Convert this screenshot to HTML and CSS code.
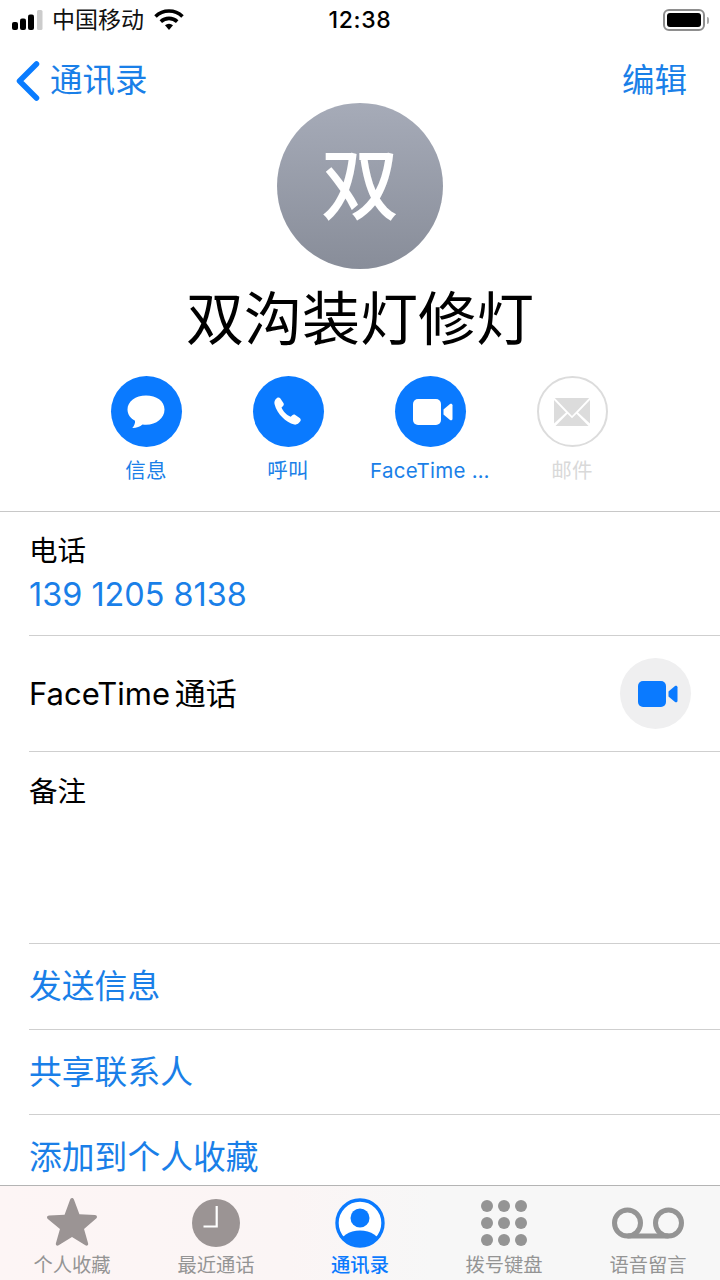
FILE: index.html
```html
<!DOCTYPE html>
<html lang="zh-CN">
<head>
<meta charset="utf-8">
<title>双沟装灯修灯</title>
<link rel="stylesheet" href="styles.css">
</head>
<body>
<div class="phone">
  <header class="status">
    <div class="status-left">
      <svg class="signal" width="32" height="22" viewBox="0 0 32 22"><rect x="1" y="13" width="6" height="8" rx="2" fill="#000"/><rect x="9" y="9.500" width="6" height="11.500" rx="2" fill="#000"/><rect x="17" y="5.500" width="6" height="15.500" rx="2" fill="#000"/><rect x="26" y="1" width="5.500" height="20" rx="1.500" fill="#ccc"/></svg>
      <span class="carrier">中国移动</span>
      <svg class="wifi" width="30" height="22" viewBox="0 0 30 22"><path d="M1.500 7.500a19.500 19.500 0 0 1 27 0" fill="none" stroke="#000" stroke-width="3.600"/><path d="M6.800 12.600a12 12 0 0 1 16.400 0" fill="none" stroke="#000" stroke-width="3.600"/><path d="M11 16.200a6 6 0 0 1 8 0L15 21z" fill="#000"/></svg>
    </div>
    <span class="clock">12:38</span>
    <div class="status-right">
      <span class="battery"><span class="battery-fill"></span></span>
      <span class="battery-cap"></span>
    </div>
  </header>

  <nav class="navbar">
    <a class="back">
      <svg width="26" height="42" viewBox="0 0 26 42"><path d="M22.500 4 5.500 21l17 17" fill="none" stroke="#0a7cff" stroke-width="5.500" stroke-linecap="round" stroke-linejoin="round"/></svg>
      <span>通讯录</span>
    </a>
    <a class="edit">编辑</a>
  </nav>

  <section class="contact">
    <div class="avatar">双</div>
    <h1 class="name">双沟装灯修灯</h1>
    <div class="actions">
      <div class="action">
        <span class="action-btn">
          <svg width="38" height="34" viewBox="0 0 38 34"><path d="M19 .5C8.500.5.500 6.500.500 14.500c0 5 3.200 9 7.500 11.200.4 2.600-1 5.200-2.700 7.300 3.500.2 7.700-1.200 10.200-3.500 1.200.2 2.400.3 3.500.3 10.500 0 18.500-6.700 18.500-15.300S29.500.5 19 .5z" fill="#fff"/></svg>
        </span>
        <span class="action-label">信息</span>
      </div>
      <div class="action">
        <span class="action-btn">
          <svg width="30" height="30" viewBox="0 0 30 30"><path d="M4 1c1.200-.8 2.600-.5 3.400.6l3 4.400c.7 1 .5 2.200-.3 3L8.500 10.600c.8 2 2 3.800 3.700 5.500 1.700 1.700 3.500 2.900 5.500 3.700l1.600-1.600c.8-.8 2-1 3-.3l4.400 3c1.100.8 1.400 2.200.6 3.400-1.500 2.200-3.600 3.700-6 3.300C17 26.800 12.500 23.500 9.300 20.300 6.100 17.100 2.800 12.500 1.500 7 1.100 4.600 1.800 2.500 4 1z" fill="#fff"/></svg>
        </span>
        <span class="action-label">呼叫</span>
      </div>
      <div class="action">
        <span class="action-btn">
          <svg class="video-glyph" width="40" height="26" viewBox="0 0 40 26"><rect x="0" y="0" width="28" height="26" rx="5" fill="#fff"/><path d="M30.500 10.500 37 5c1-.8 2.500-.2 2.500 1.200v13.600c0 1.400-1.500 2-2.500 1.200l-6.500-5.500z" fill="#fff"/></svg>
        </span>
        <span class="action-label">FaceTime …</span>
      </div>
      <div class="action is-off">
        <span class="action-btn">
          <svg width="36" height="28" viewBox="0 0 36 28"><path d="M.8 0h34.400L18 18zM0 2l12 12.500L0 25.500zM36 2 24 14.500l12 11zM1.500 28l12-12.300 4.500 4.500 4.500-4.500 12 12.300z" fill="#dcdcdc"/></svg>
        </span>
        <span class="action-label">邮件</span>
      </div>
    </div>
  </section>

  <main class="details">
    <div class="row row-phone">
      <div class="row-title">电话</div>
      <div class="row-number">139 1205 8138</div>
    </div>
    <div class="row row-facetime">
      <div class="row-title row-title-large">FaceTime 通话</div>
      <span class="round-video">
        <svg class="video-glyph" width="40" height="26" viewBox="0 0 40 26"><rect x="0" y="0" width="28" height="26" rx="5" fill="#0a7aff"/><path d="M30.500 10.500 37 5c1-.8 2.500-.2 2.500 1.200v13.600c0 1.400-1.500 2-2.500 1.200l-6.500-5.500z" fill="#0a7aff"/></svg>
      </span>
    </div>
    <div class="row row-notes">
      <div class="row-title">备注</div>
    </div>
    <div class="row row-link">发送信息</div>
    <div class="row row-link row-link-short">共享联系人</div>
    <div class="row row-link">添加到个人收藏</div>
  </main>

  <footer class="tabbar">
    <div class="tab">
      <span class="tab-icon tab-icon-star"><svg width="52" height="49" viewBox="0 0 54 50"><path d="M27 .5c1 0 1.700.7 2.100 1.800l5.600 15.100 16 .9c2.200.1 3 2.300 1.400 3.700L39.500 32.700l4.200 15c.5 1.800-1.200 3-2.800 2L27 41.200l-13.900 8.500c-1.600 1-3.300-.2-2.800-2l4.200-15L1.900 22.500c-1.600-1.400-.8-3.600 1.400-3.700l16-.9 5.600-15.100C25.300 1.200 26 .5 27 .5z" fill="#9b9494"/></svg></span>
      <span class="tab-label">个人收藏</span>
    </div>
    <div class="tab">
      <span class="tab-icon"><svg width="48" height="48" viewBox="0 0 48 48"><circle cx="24" cy="24" r="24" fill="#9b9494"/><path d="M24.700 7v20.500H11.500" fill="none" stroke="#fff" stroke-width="2.200"/></svg></span>
      <span class="tab-label">最近通话</span>
    </div>
    <div class="tab is-active">
      <span class="tab-icon"><svg width="50" height="50" viewBox="0 0 50 50"><defs><clipPath id="ring"><circle cx="25" cy="25" r="22"/></clipPath></defs><circle cx="25" cy="25" r="23" fill="#fff" stroke="#0a7aff" stroke-width="3.400"/><g clip-path="url(#ring)" fill="#0a7aff"><circle cx="25" cy="20" r="9.500"/><ellipse cx="25" cy="46" rx="20" ry="13.500"/></g></svg></span>
      <span class="tab-label">通讯录</span>
    </div>
    <div class="tab">
      <span class="tab-icon"><svg width="46" height="46" viewBox="0 0 46 46" fill="#949494"><circle cx="6" cy="6" r="6"/><circle cx="23" cy="6" r="6"/><circle cx="40" cy="6" r="6"/><circle cx="6" cy="23" r="6"/><circle cx="23" cy="23" r="6"/><circle cx="40" cy="23" r="6"/><circle cx="6" cy="40" r="6"/><circle cx="23" cy="40" r="6"/><circle cx="40" cy="40" r="6"/></svg></span>
      <span class="tab-label">拨号键盘</span>
    </div>
    <div class="tab">
      <span class="tab-icon"><svg width="72" height="50" viewBox="0 0 72 50"><g fill="none" stroke="#949494" stroke-width="5"><circle cx="15.500" cy="25" r="13"/><circle cx="56.500" cy="25" r="13"/><path d="M15.500 38h41"/></g></svg></span>
      <span class="tab-label">语音留言</span>
    </div>
  </footer>
</div>
</body>
</html>
```

FILE: styles.css
```css
* { box-sizing: border-box; }

html, body {
  margin: 0;
  padding: 0;
  background: #fff;
}

body {
  font-family: Inter, "Noto Sans CJK SC", sans-serif;
  color: #000;
}

.phone {
  width: 720px;
  height: 1280px;
  display: flex;
  flex-direction: column;
  overflow: hidden;
}

/* status bar */
.status {
  height: 40px;
  flex: none;
  display: grid;
  grid-template-columns: 1fr auto 1fr;
  align-items: center;
  padding: 0 11px;
}

.status-left {
  display: flex;
  align-items: center;
}

.signal { margin-right: 9px; }

.carrier {
  font-size: 23px;
  line-height: 28px;
  color: #111;
}

.wifi { margin-left: 10px; }

.clock {
  font-size: 23px;
  font-weight: 500;
  letter-spacing: 0.7px;
}

.status-right {
  display: flex;
  align-items: center;
  justify-content: flex-end;
}

.battery {
  width: 42px;
  height: 22px;
  border: 2px solid #8e8e8e;
  border-radius: 6px;
  padding: 2px;
  display: block;
}

.battery-fill {
  display: block;
  width: 100%;
  height: 100%;
  background: #000;
  border-radius: 3px;
}

.battery-cap {
  width: 2px;
  height: 7px;
  margin-left: 2px;
  background: #a9a9a9;
  border-radius: 0 2px 2px 0;
}

/* navigation bar */
.navbar {
  height: 63px;
  flex: none;
  display: flex;
  align-items: center;
  justify-content: space-between;
  padding: 18px 33px 0 14px;
  font-size: 32.500px;
  line-height: 40px;
  color: #1a7fe8;
}

.back {
  display: flex;
  align-items: center;
  gap: 10px;
}

.back svg { flex: none; }

/* contact header */
.contact {
  flex: none;
  height: 408px;
  display: flex;
  flex-direction: column;
  align-items: center;
}

.avatar {
  width: 166px;
  height: 166px;
  flex: none;
  border-radius: 50%;
  background: linear-gradient(180deg, #a6abb8 0%, #888d99 100%);
  color: #fff;
  font-size: 78px;
  font-weight: 500;
  line-height: 166px;
  text-align: center;
}

.name {
  margin: 13px 0 0;
  font-size: 58px;
  font-weight: 400;
  line-height: 74px;
  color: #000;
}

.actions {
  margin: 20px 0 0 -2px;
  display: flex;
  width: 568px;
}

.action {
  width: 142px;
  display: flex;
  flex-direction: column;
  align-items: center;
}

.action-btn {
  width: 71px;
  height: 71px;
  border-radius: 50%;
  background: #0a7aff;
  display: flex;
  align-items: center;
  justify-content: center;
}

/* the camera glyph sits slightly right of its circle's centre */
.video-glyph { margin-left: 5px; }

.action-label {
  margin-top: 10px;
  font-size: 20.500px;
  line-height: 28px;
  letter-spacing: 0.3px;
  color: #1a7fe8;
  white-space: nowrap;
}

.is-off .action-btn {
  background: #fff;
  border: 2px solid #dcdcdc;
}

.is-off .action-label { color: #d9d9d9; }

/* detail rows */
.details {
  flex: 1;
  border-top: 1px solid #c8c8c8;
  min-height: 0;
  padding-left: 29px;
}

.row {
  border-bottom: 1px solid #cfcfcf;
}

.row:last-child { border-bottom: 0; }

.row-title {
  font-size: 28.500px;
  line-height: 38px;
  color: #000;
}

.row-title-large {
  font-size: 31px;
  word-spacing: -4px;
}

.row-phone {
  height: 124px;
  padding-top: 20px;
}

.row-number {
  margin-top: 2px;
  font-size: 32.400px;
  line-height: 46px;
  color: #1a7fe8;
}

.row-facetime {
  height: 116px;
  display: flex;
  align-items: center;
  justify-content: space-between;
  padding-right: 29px;
}

.round-video {
  width: 71px;
  height: 71px;
  border-radius: 50%;
  background: #efeff0;
  display: flex;
  align-items: center;
  justify-content: center;
}

.row-notes {
  height: 192px;
  padding-top: 21px;
}

.row-link {
  height: 86px;
  font-size: 32.800px;
  line-height: 84px;
  color: #1a7fe8;
}

.row-link-short { height: 85px; }

/* tab bar */
.tabbar {
  height: 95px;
  flex: none;
  border-top: 1px solid #b4b4b4;
  background: linear-gradient(90deg, #fdf5f5 0%, #fbf5f5 40%, #f7f7f7 60%, #f7f7f7 100%);
  display: grid;
  grid-template-columns: repeat(5, 1fr);
}

.tab {
  display: flex;
  flex-direction: column;
  align-items: center;
  padding-top: 11px;
  height: 94px;
}

.tab-icon {
  height: 52px;
  display: flex;
  align-items: center;
  justify-content: center;
}

.tab-icon-star { padding-bottom: 3px; }

.tab-label {
  margin-top: 3px;
  font-size: 19.300px;
  line-height: 26px;
  color: #949494;
  white-space: nowrap;
}

.is-active .tab-label {
  color: #0a7aff;
  font-weight: 500;
}
```
